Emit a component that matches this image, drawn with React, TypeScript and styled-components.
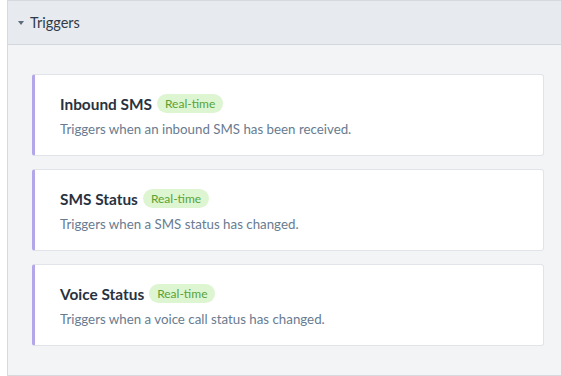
import React from "react";
import styled, { createGlobalStyle } from "styled-components";

const Global = createGlobalStyle`
  html, body { margin: 0; padding: 0; background: #ffffff; overflow: hidden; }
  body { font-family: "Lato", "Open Sans", sans-serif; }
`;

const Panel = styled.section`
  margin-left: 7px;
  width: 570px;
  height: 376px;
  box-sizing: border-box;
  border: 1px solid #d6dadf;
  border-right: none;
  background: #f3f4f6;
  display: flex;
  flex-direction: column;
`;

const Header = styled.div`
  height: 44px;
  box-sizing: border-box;
  background: #e7eaee;
  border-bottom: 1px solid #d3d8de;
  display: flex;
  align-items: center;
  padding-left: 10px;
  gap: 6px;
  color: #2f3b4a;
  font-size: 14.5px;
`;

const Caret = styled.span`
  width: 0;
  height: 0;
  border-left: 3.5px solid transparent;
  border-right: 3.5px solid transparent;
  border-top: 4px solid #5d6b7b;
  margin-top: 1px;
`;

const Body = styled.div`
  padding: 29px 18px 29px 24px;
  display: flex;
  flex-direction: column;
  gap: 13px;
`;

const Card = styled.div`
  width: 512px;
  height: 82px;
  box-sizing: border-box;
  background: #ffffff;
  border: 1px solid #e0e3e7;
  border-left: 3px solid #b3a7ea;
  border-radius: 3px;
  padding: 19px 0 0 25px;
  display: flex;
  flex-direction: column;
  gap: 8px;
`;

const TitleRow = styled.div`
  display: flex;
  align-items: center;
  gap: 5px;
`;

const Title = styled.span`
  font-weight: 700;
  font-size: 15.4px;
  color: #28323f;
`;

const Badge = styled.span`
  background: #def5d1;
  color: #58a336;
  font-size: 12px;
  line-height: 19px;
  height: 19px;
  padding: 0 8px;
  border-radius: 10px;
`;

const Desc = styled.div`
  font-size: 13.3px;
  color: #687b90;
`;

const triggers = [
  { title: "Inbound SMS", desc: "Triggers when an inbound SMS has been received." },
  { title: "SMS Status", desc: "Triggers when a SMS status has changed." },
  { title: "Voice Status", desc: "Triggers when a voice call status has changed." },
];

export default function App() {
  return (
    <>
      <Global />
      <Panel>
        <Header>
          <Caret />
          <span>Triggers</span>
        </Header>
        <Body>
          {triggers.map((t) => (
            <Card key={t.title}>
              <TitleRow>
                <Title>{t.title}</Title>
                <Badge>Real-time</Badge>
              </TitleRow>
              <Desc>{t.desc}</Desc>
            </Card>
          ))}
        </Body>
      </Panel>
    </>
  );
}
